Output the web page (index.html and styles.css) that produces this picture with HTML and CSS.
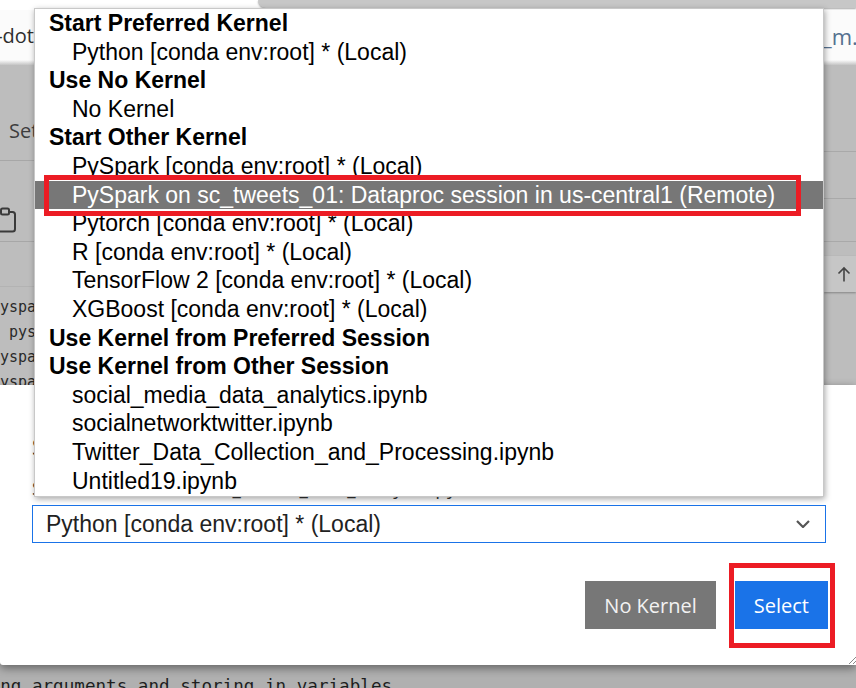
FILE: index.html
```html
<!DOCTYPE html>
<html lang="en">
<head>
<meta charset="utf-8">
<title>Select Kernel</title>
<link rel="stylesheet" href="styles.css">
</head>
<body>
<div class="topstrip"><div class="browser-tab"></div></div>
<div class="tabrow">
  <div class="doc-tab left"><span>twitter_analysis-dot</span></div>
  <div class="doc-tab right"><span>_m.ipynb</span></div>
</div>
<div class="workspace">
  <div class="left-col">
    <div class="side-head"><span>Settings</span></div>
    <div class="side-tools">
      <svg class="clip-icon" width="24" height="26" viewBox="0 0 24 26">
        <rect x="3" y="5" width="18" height="19.5" rx="2.5" fill="none" stroke="#3a3a3a" stroke-width="2"/>
        <rect x="7" y="1.5" width="8" height="6" rx="1.5" fill="#bdbdbd" stroke="#3a3a3a" stroke-width="2"/>
      </svg>
    </div>
    <div class="side-gap"></div>
    <div class="code">
      <div class="code-row">pyspark.sql import SparkSession</div>
      <div class="code-row">  pyspark.sql.functions as F</div>
      <div class="code-row">pyspark.ml import Pipeline</div>
      <div class="code-row">pyspark.ml.feature import Tokenizer</div>
    </div>
  </div>
  <div class="right-col">
    <div class="nb-bar b1"></div>
    <div class="nb-bar b2"></div>
    <div class="nb-bar b3"></div>
    <div class="cell-tools">
      <span class="cell-btn">
        <svg width="14" height="16" viewBox="0 0 14 16"><path d="M7 15.5V2M1.5 7.5L7 2l5.5 5.5" fill="none" stroke="#444" stroke-width="1.6"/></svg>
      </span>
    </div>
  </div>
</div>
<div class="dialog">
  <div class="dlg-title">Select Kernel</div>
  <div class="dlg-label">Select kernel for: "data_tweets_data_analysis.ipynb"</div>
  <div class="select">
    <span>Python [conda env:root] * (Local)</span>
    <svg width="14" height="8" viewBox="0 0 14 8"><path d="M1 1l6 6 6-6" fill="none" stroke="#555" stroke-width="2.2"/></svg>
  </div>
  <div class="actions">
    <button class="btn gray">No Kernel</button>
    <button class="btn blue">Select</button>
  </div>
  <svg class="grip" width="8" height="8" viewBox="0 0 8 8"><path d="M8 1L1 8M8 5L5 8" stroke="#8a8a8a" stroke-width="1"/></svg>
</div>
<div class="below">
  <div class="code-line"># Parsing arguments and storing in variables</div>
</div>

<div class="popup">
  <div class="grp">Start Preferred Kernel</div>
  <div class="opt">Python [conda env:root] * (Local)</div>
  <div class="grp">Use No Kernel</div>
  <div class="opt">No Kernel</div>
  <div class="grp">Start Other Kernel</div>
  <div class="opt">PySpark [conda env:root] * (Local)</div>
  <div class="opt active">PySpark on sc_tweets_01: Dataproc session in us-central1 (Remote)</div>
  <div class="opt">Pytorch [conda env:root] * (Local)</div>
  <div class="opt">R [conda env:root] * (Local)</div>
  <div class="opt">TensorFlow 2 [conda env:root] * (Local)</div>
  <div class="opt">XGBoost [conda env:root] * (Local)</div>
  <div class="grp">Use Kernel from Preferred Session</div>
  <div class="grp">Use Kernel from Other Session</div>
  <div class="opt">social_media_data_analytics.ipynb</div>
  <div class="opt">socialnetworktwitter.ipynb</div>
  <div class="opt">Twitter_Data_Collection_and_Processing.ipynb</div>
  <div class="opt">Untitled19.ipynb</div>
</div>
<div class="annot annot-option"></div>
<div class="annot annot-select"></div>
</body>
</html>
```

FILE: styles.css
```css
* { box-sizing: border-box; }
html, body { margin: 0; padding: 0; }
body {
  width: 856px;
  height: 688px;
  overflow: hidden;
  position: relative;
  background: #b0b0b0;
  font-family: "Open Sans", "Noto Sans", sans-serif;
}

.topstrip { height: 10px; background: #fff; padding-left: 258px; }
.browser-tab {
  height: 8px;
  background: #c7c7c7;
  border-bottom-left-radius: 9px;
  box-shadow: 0 1px 2px rgba(0,0,0,.35);
}

.tabrow {
  height: 55px;
  display: flex;
  justify-content: space-between;
  align-items: flex-start;
  padding-top: 12px;
  background: linear-gradient(to bottom, #fbfbfb 0, #fbfbfb 50px, #c4c4c4 55px);
  font-size: 20px;
  line-height: 28px;
}
.doc-tab { width: 34px; overflow: hidden; white-space: nowrap; display: flex; }
.doc-tab.left { justify-content: flex-end; color: #2e2e2e; }
.doc-tab.right { justify-content: flex-start; color: #55718f; font-size: 22px; }

.workspace { height: 320px; display: flex; background: #bdbdbd; color: #333; }
.left-col { flex: 1; min-width: 0; }
.right-col { flex: 0 0 32px; }

.side-head {
  height: 96px;
  border-bottom: 1px solid #a7a7a7;
  padding: 0 0 16px 9px;
  display: flex;
  align-items: flex-end;
  font-size: 20px;
  line-height: 27px;
  color: #3d3d3d;
  white-space: nowrap;
}
.side-tools { height: 81px; border-bottom: 1px solid #a7a7a7; padding-top: 46px; }
.clip-icon { display: block; margin-left: -6px; }
.side-gap { height: 45px; border-bottom: 1px solid #b3b3b3; }
.code {
  padding-top: 8px;
  margin-left: -9px;
  font-family: "DejaVu Sans Mono", "Liberation Mono", monospace;
  font-size: 15px;
  line-height: 25px;
  color: #2a2a2a;
}
.code-row { white-space: pre; }

.nb-bar { border-bottom: 1px solid #a9a9a9; }
.nb-bar.b1 { height: 87px; }
.nb-bar.b2 { height: 47px; }
.nb-bar.b3 { height: 43px; }
.cell-tools { margin-top: 14px; }
.cell-btn {
  height: 36px;
  display: flex;
  align-items: center;
  padding-left: 13px;
  background: #c6c6c6;
  box-shadow: 0 1px 2px rgba(0,0,0,.3);
}
.cell-btn svg { display: block; }

.dialog {
  position: relative;
  z-index: 1;
  height: 280px;
  background: #fff;
  padding: 46px 28px 0 32px;
  border-bottom-left-radius: 3px;
  box-shadow: 0 3px 10px rgba(0,0,0,.45);
}
.dlg-title { font-size: 22px; line-height: 30px; color: #222; }
.dlg-label { margin-top: 14px; font-size: 19px; line-height: 26px; color: #333; white-space: nowrap; }
.select {
  margin-top: 4px;
  margin-right: 2px;
  height: 38px;
  border: 1px solid #1a73e8;
  display: flex;
  align-items: center;
  justify-content: space-between;
  padding: 0 15px 0 13px;
  font-family: "Liberation Sans", Arial, sans-serif;
  font-size: 23px;
  color: #222;
}
.select svg { display: block; }
.actions { margin-top: 38px; display: flex; justify-content: flex-end; gap: 19px; }
.btn {
  height: 48px;
  padding: 0 19px;
  border: none;
  border-radius: 0;
  font-family: "Open Sans", "Noto Sans", sans-serif;
  font-size: 20px;
}
.btn.gray { background: #777; color: #f2f2f2; }
.btn.blue { background: #1a73e8; color: #fff; }
.grip { position: absolute; right: 0; bottom: 1px; }

.below {
  height: 30px;
  padding-top: 10px;
  overflow: hidden;
}
.code-line {
  font-family: "DejaVu Sans Mono", "Liberation Mono", monospace;
  font-size: 17.6px;
  line-height: 22px;
  color: #1e1e1e;
  white-space: pre;
  text-indent: -74px;
}

.popup {
  position: absolute;
  left: 34px;
  top: 8px;
  width: 790px;
  z-index: 5;
  background: #fff;
  border: 1px solid #c8c8c8;
  padding-bottom: 1px;
  box-shadow: 1px 2px 6px rgba(0,0,0,.35);
  font-family: "Liberation Sans", Arial, sans-serif;
  font-size: 23px;
  line-height: 28.6px;
  color: #000;
  white-space: nowrap;
}
.grp { font-weight: bold; padding-left: 14px; }
.opt { padding-left: 37px; }
.opt.active { background: #777; color: #fff; }

.annot { position: absolute; z-index: 6; border: 5px solid #ec1c24; }
.annot-option { left: 44px; top: 175px; width: 757px; height: 41px; }
.annot-select { left: 729px; top: 563px; width: 106px; height: 85px; }
```
